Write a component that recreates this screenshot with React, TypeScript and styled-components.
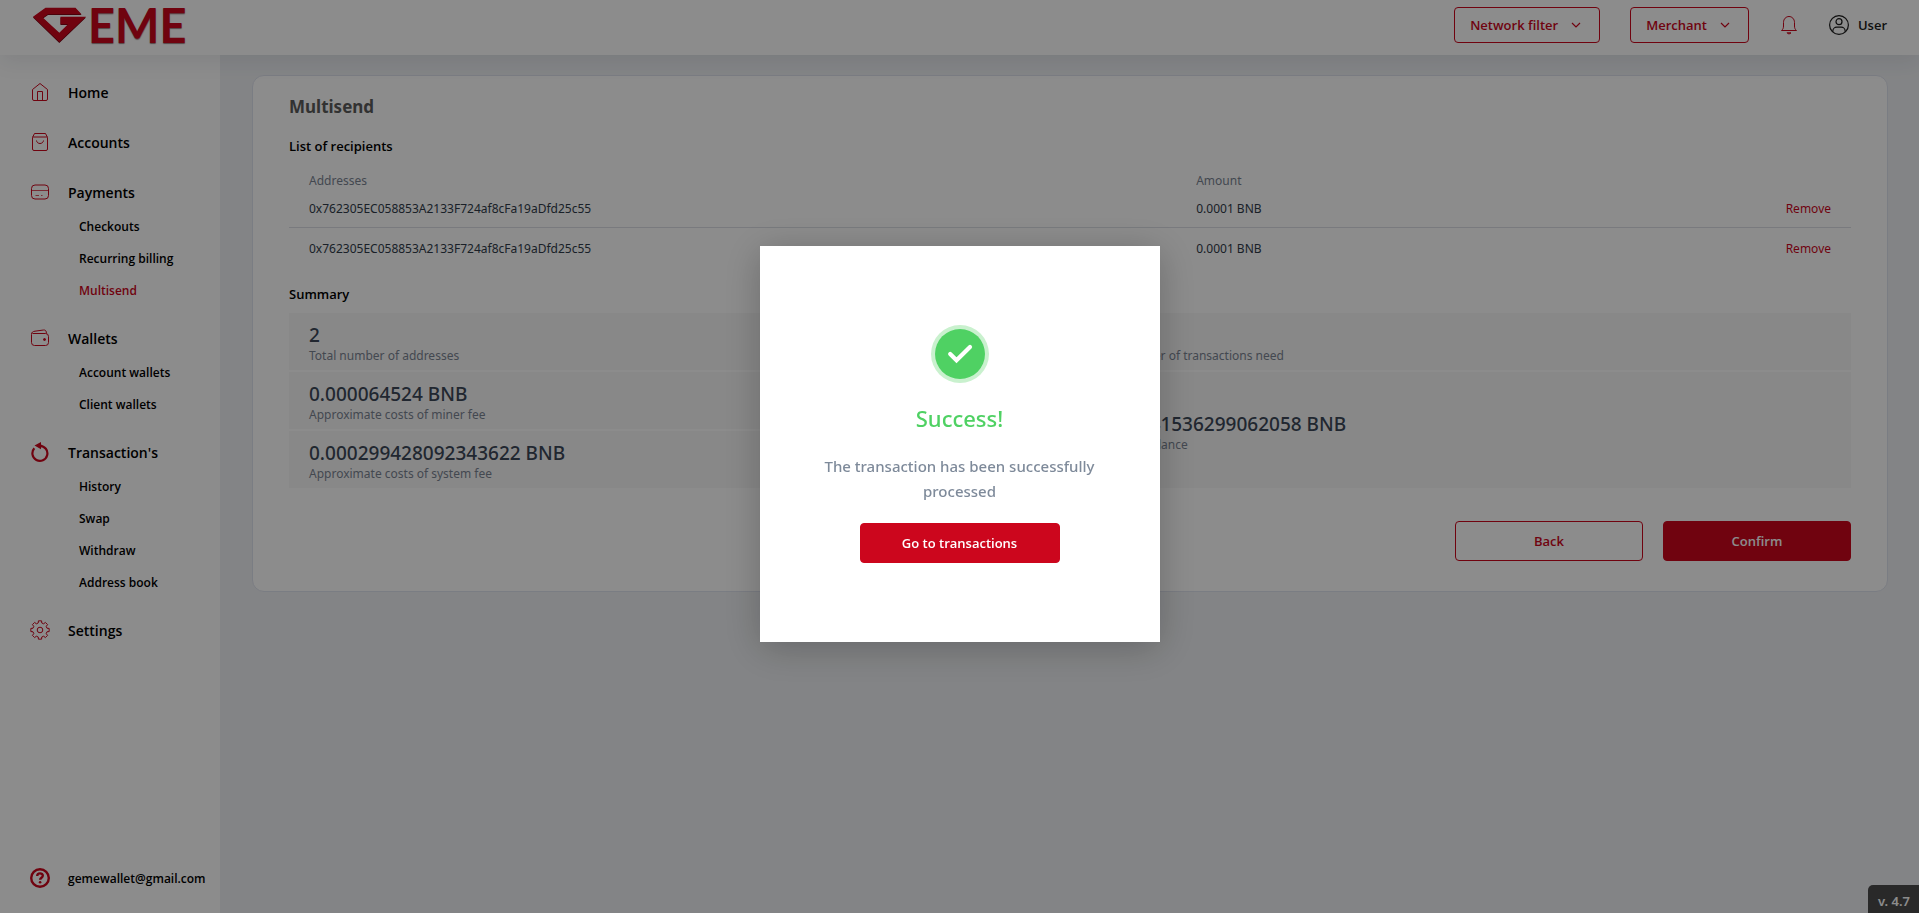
import React from 'react';
import styled, { createGlobalStyle } from 'styled-components';

const RED = '#cc061d';
const GREEN = '#4fd163';
const BODY_FONT = '"Noto Sans", "Open Sans", sans-serif';
const UI_FONT = '"Open Sans", "Noto Sans", sans-serif';

const GlobalStyle = createGlobalStyle`
  *, *::before, *::after { box-sizing: border-box; }
  body { margin: 0; background: #eff1f4; font-family: ${BODY_FONT}; color: #000; }
  button { font-family: inherit; cursor: pointer; }
  h1, h2, p, ul { margin: 0; padding: 0; }
  ul { list-style: none; }
`;

const Page = styled.div`
  display: flex;
  flex-direction: column;
  min-height: 100vh;
`;

/* Header */

const Header = styled.header`
  position: relative;
  z-index: 1;
  display: flex;
  align-items: center;
  justify-content: space-between;
  height: 55px;
  padding: 0 32px 5px;
  background: #fff;
  box-shadow: 0 8px 20px rgba(30, 40, 60, 0.08);
`;

const Logo = styled.a`
  display: flex;
  align-items: center;
  color: ${RED};
  text-decoration: none;
  text-shadow: 0 1px 1px rgba(60, 0, 8, 0.5);
`;

const LogoText = styled.span`
  font-family: Lato, sans-serif;
  font-size: 47px;
  line-height: 50px;
  font-weight: 700;
`;

const HeaderTools = styled.div`
  display: flex;
  align-items: center;
`;

const FilterButton = styled.button`
  display: flex;
  align-items: center;
  gap: 10px;
  height: 36px;
  margin-right: 30px;
  padding: 0 15px;
  border: 1px solid ${RED};
  border-radius: 4px;
  background: transparent;
  color: ${RED};
  font-family: ${UI_FONT};
  font-size: 13px;
  font-weight: 600;
`;

const IconButton = styled.button`
  display: flex;
  padding: 0;
  margin-right: 30px;
  border: 0;
  background: none;
`;

const UserButton = styled.button`
  display: flex;
  align-items: center;
  gap: 9px;
  padding: 0;
  border: 0;
  background: none;
  color: #1c1c1c;
  font-family: ${UI_FONT};
  font-size: 13px;
  font-weight: 600;
`;

/* Sidebar */

const Body = styled.div`
  display: flex;
  flex: 1;
`;

const Sidebar = styled.nav`
  display: flex;
  flex-direction: column;
  justify-content: space-between;
  flex: 0 0 220px;
  padding: 19px 0 17px;
  background: #fff;
  font-family: ${UI_FONT};
  font-weight: 600;
`;

const NavGroups = styled.ul`
  display: flex;
  flex-direction: column;
  gap: 14px;
`;

const NavLink = styled.a<{ $small?: boolean }>`
  display: flex;
  align-items: center;
  gap: 18px;
  height: 36px;
  padding-left: 30px;
  color: #000;
  font-size: ${(p) => (p.$small ? 12 : 14)}px;
  text-decoration: none;
`;

const SubLink = styled.a<{ $active?: boolean }>`
  display: flex;
  align-items: center;
  height: 32px;
  padding-left: 79px;
  color: ${(p) => (p.$active ? RED : '#000')};
  font-size: 12px;
  text-decoration: none;
`;

/* Content */

const Main = styled.main`
  flex: 1;
  min-width: 0;
  padding: 20px 31px 20px 32px;
`;

const Card = styled.section`
  padding: 19px 36px 30px;
  border: 1px solid #dfe3ee;
  border-radius: 12px;
  background: #fff;
`;

const Title = styled.h1`
  margin-bottom: 17px;
  color: #5c5c5c;
  font-size: 17px;
  line-height: 24px;
  font-weight: 700;
`;

const Subtitle = styled.h2`
  font-family: ${UI_FONT};
  font-size: 13px;
  line-height: 20px;
  font-weight: 600;
`;

const Recipients = styled.table`
  width: 100%;
  margin: 18px 0 16px;
  border-collapse: separate;
  border-spacing: 0;
  table-layout: fixed;
  font-size: 12px;
  text-align: left;

  th, td { padding: 0 20px; }
  th { height: 14px; line-height: 14px; font-weight: 400; color: #7b8493; }
  td { height: 40px; padding-top: 2px; line-height: 16px; color: #303b4a; }
  tbody tr:not(:last-child) td { border-bottom: 1px solid #dcdfe6; }
`;

const AddressCol = styled.col`width: 56.8%;`;
const ActionCol = styled.col`width: 15%;`;

const ActionCell = styled.td`
  text-align: right;
`;

const RemoveButton = styled.button`
  padding: 0;
  border: 0;
  background: none;
  color: ${RED};
  font-size: 12px;
  line-height: 16px;
`;

const SummaryGrid = styled.div`
  display: grid;
  grid-template-columns: 1fr 1fr;
  gap: 2px 0;
  margin: 9px 0 33px;
`;

const Stat = styled.div<{ $tall?: boolean }>`
  display: flex;
  flex-direction: column;
  justify-content: center;
  grid-row: ${(p) => (p.$tall ? 'span 2' : 'auto')};
  padding: 10px 20px 5px;
  background: #f8f8f8;
`;

const StatValue = styled.p`
  color: #3c4858;
  font-size: 19px;
  line-height: 24px;
  font-weight: 500;
`;

const StatLabel = styled.p`
  color: #7b8493;
  font-size: 12px;
  line-height: 18px;
`;

const Actions = styled.div`
  display: flex;
  justify-content: flex-end;
  gap: 20px;
`;

const Button = styled.button<{ $outline?: boolean; $width: number }>`
  width: ${(p) => p.$width}px;
  height: 40px;
  border: 1px solid ${RED};
  border-radius: 4px;
  background: ${(p) => (p.$outline ? 'transparent' : RED)};
  color: ${(p) => (p.$outline ? RED : '#fff')};
  font-family: ${UI_FONT};
  font-size: 13px;
  font-weight: 600;
`;

const Version = styled.div`
  position: fixed;
  right: 0;
  bottom: 0;
  padding: 6px 9px 2px 10px;
  border-radius: 5px 0 0;
  background: #4b4b4b;
  color: #fff;
  font-size: 13px;
  line-height: 20px;
  font-weight: 600;
`;

/* Dialog */

const Overlay = styled.div`
  position: fixed;
  inset: 0;
  z-index: 10;
  display: flex;
  align-items: center;
  justify-content: center;
  padding-bottom: 25px;
  background: rgba(0, 0, 0, 0.45);
`;

const Dialog = styled.div`
  display: flex;
  flex-direction: column;
  align-items: center;
  width: 400px;
  padding: 79px 60px;
  background: #fff;
  text-align: center;
  box-shadow: 0 6px 36px rgba(0, 0, 0, 0.24);
`;

const DialogTitle = styled.h2`
  margin: 19px 0 20px;
  color: ${GREEN};
  font-size: 22px;
  line-height: 32px;
  font-weight: 500;
`;

const DialogText = styled.p`
  margin-bottom: 19px;
  color: #7e8a9a;
  font-size: 15px;
  line-height: 25px;
  font-weight: 500;
`;

/* Icons */

type IconName = 'home' | 'bag' | 'card' | 'wallet' | 'refresh' | 'gear' | 'help';

const gearPath = (() => {
  const points: string[] = [];
  for (let i = 0; i < 8; i++) {
    const base = (i * Math.PI) / 4 - Math.PI / 2;
    [[-0.25, 7.2], [-0.17, 9.3], [0.17, 9.3], [0.25, 7.2]].forEach(([a, r]) => {
      points.push(`${(10 + r * Math.cos(base + a)).toFixed(2)} ${(10 + r * Math.sin(base + a)).toFixed(2)}`);
    });
  }
  return `M${points.join('L')}Z`;
})();

const icons: Record<IconName, React.ReactNode> = {
  home: (
    <>
      <path d="M2.500 7.500 10 1.500l7.500 6V17a1.500 1.500 0 0 1-1.500 1.500H4A1.500 1.500 0 0 1 2.500 17Z" />
      <path d="M7.500 18.500V9.500h5v9" />
    </>
  ),
  bag: (
    <>
      <path d="M2.500 5.500 4.500 1.500h11l2 4V17a1.500 1.500 0 0 1-1.500 1.500H4A1.500 1.500 0 0 1 2.500 17Z" />
      <path d="M2.500 5h15M6.500 8.500c.4 4 6.600 4 7 0" />
    </>
  ),
  card: (
    <>
      <rect x="1.500" y="3" width="17" height="14" rx="3.500" />
      <path d="M1.500 8.500h17" strokeOpacity="0.7" />
      <path d="M5.500 13.500H9M11 13.500h1.500" strokeOpacity="0.7" />
    </>
  ),
  wallet: (
    <>
      <path d="M1.500 6.500v8a3 3 0 0 0 3 3h11a3 3 0 0 0 3-3v-6a3 3 0 0 0-3-3h-13" />
      <path d="M1.500 6.500C1.500 4 3 3.500 5 3.200l8.500-1.200c1.500-.2 2.500.5 2.800 2V5.500" />
      <circle cx="14.500" cy="11.500" r="1" fill="currentColor" />
    </>
  ),
  refresh: (
    <>
      <path strokeWidth="2.200" d="M4.300 6.300A7.500 7.500 0 1 0 10 3.800" />
      <path fill="currentColor" stroke="none" d="M4.500 3.600 11 0v2.400l1.500 1-1.500 1.200v2.600Z" />
    </>
  ),
  gear: (
    <>
      <path d={gearPath} strokeLinejoin="round" />
      <circle cx="10" cy="10" r="2.800" />
    </>
  ),
  help: (
    <>
      <circle cx="10" cy="10" r="8.800" strokeWidth="2.400" />
      <path strokeWidth="2.400" d="M7.200 8c0-3.600 5.800-3.400 5.600-.2-.1 1.900-2.700 1.900-2.700 4" />
      <circle cx="10.100" cy="14.300" r="1.300" fill="currentColor" stroke="none" />
    </>
  ),
};

const IconSvg = styled.svg`
  flex: none;
  width: 20px;
  height: 20px;
  color: ${RED};
  fill: none;
  stroke: currentColor;
`;

const Icon = ({ name }: { name: IconName }) => (
  <IconSvg viewBox="0 0 20 20" aria-hidden="true">{icons[name]}</IconSvg>
);

const Chevron = () => (
  <svg width="16" height="16" viewBox="0 0 16 16" fill="none" stroke={RED} strokeWidth="1.200" aria-hidden="true">
    <path d="m4 6 4 4 4-4" />
  </svg>
);

const Gem = () => (
  <svg width="56" height="50" viewBox="0 0 56 50" fill={RED} aria-hidden="true">
    <path
      fill="#6e0311"
      d="M1 17.500 13.500 8.500H43.500L49.500 15H16L11 18.500 27.300 33.500 36 25H28.500V17.500H54L27.300 43Z"
    />
    <path d="M1 16.700 13.500 7.700H43.500L49.500 14.200H16L11 17.700 27.300 32.700 36 24.200H28.500V16.700H54L27.300 42Z" />
  </svg>
);

/* Data */

type Group = { icon: IconName; label: string; children?: string[] };

const navigation: Group[] = [
  { icon: 'home', label: 'Home' },
  { icon: 'bag', label: 'Accounts' },
  { icon: 'card', label: 'Payments', children: ['Checkouts', 'Recurring billing', 'Multisend'] },
  { icon: 'wallet', label: 'Wallets', children: ['Account wallets', 'Client wallets'] },
  { icon: 'refresh', label: "Transaction's", children: ['History', 'Swap', 'Withdraw', 'Address book'] },
  { icon: 'gear', label: 'Settings' },
];

const recipients = [
  { id: 1, address: '0x762305EC058853A2133F724af8cFa19aDfd25c55', amount: '0.0001 BNB' },
  { id: 2, address: '0x762305EC058853A2133F724af8cFa19aDfd25c55', amount: '0.0001 BNB' },
];

const summary = [
  { value: '2', label: 'Total number of addresses' },
  { value: '1', label: 'Total number of transactions need' },
  { value: '0.000064524 BNB', label: 'Approximate costs of miner fee' },
  { value: '0.056341536299062058 BNB', label: 'Available balance', tall: true },
  { value: '0.000299428092343622 BNB', label: 'Approximate costs of system fee' },
];

export default function App() {
  return (
    <Page>
      <GlobalStyle />
      <Header>
        <Logo href="#" aria-label="GEME">
          <Gem />
          <LogoText>EME</LogoText>
        </Logo>
        <HeaderTools>
          <FilterButton type="button">Network filter<Chevron /></FilterButton>
          <FilterButton type="button">Merchant<Chevron /></FilterButton>
          <IconButton type="button" aria-label="Notifications">
            <svg width="20" height="20" viewBox="0 0 20 20" fill="none" stroke={RED} aria-hidden="true">
              <path d="M2.500 15.500c1.500-1.300 2-2.500 2-4.500V7.500C4.500 4 7 1.500 10 1.500s5.500 2.500 5.500 6V11c0 2 .5 3.200 2 4.500Z" />
              <path d="M8 17.800c.6 1.400 3.400 1.400 4 0Z" />
            </svg>
          </IconButton>
          <UserButton type="button">
            <svg width="20" height="20" viewBox="0 0 20 20" fill="none" stroke="#1c1c1c" strokeWidth="1.200" aria-hidden="true">
              <circle cx="10" cy="10" r="9.400" />
              <circle cx="10" cy="6.700" r="3" />
              <path d="M3.800 17v-.800a4 4 0 0 1 4-4h4.400a4 4 0 0 1 4 4v.8" />
            </svg>
            User
          </UserButton>
        </HeaderTools>
      </Header>

      <Body>
        <Sidebar aria-label="Main">
          <NavGroups>
            {navigation.map((group) => (
              <li key={group.label}>
                <NavLink href="#"><Icon name={group.icon} />{group.label}</NavLink>
                {group.children && (
                  <ul>
                    {group.children.map((child) => (
                      <li key={child}>
                        <SubLink href="#" $active={child === 'Multisend'}>{child}</SubLink>
                      </li>
                    ))}
                  </ul>
                )}
              </li>
            ))}
          </NavGroups>
          <NavLink href="mailto:gemewallet@gmail.com" $small><Icon name="help" />gemewallet@gmail.com</NavLink>
        </Sidebar>

        <Main>
          <Card>
            <Title>Multisend</Title>
            <Subtitle>List of recipients</Subtitle>
            <Recipients>
              <colgroup><AddressCol /><col /><ActionCol /></colgroup>
              <thead>
                <tr><th scope="col">Addresses</th><th scope="col">Amount</th><th aria-label="Actions" /></tr>
              </thead>
              <tbody>
                {recipients.map((r) => (
                  <tr key={r.id}>
                    <td>{r.address}</td>
                    <td>{r.amount}</td>
                    <ActionCell><RemoveButton type="button">Remove</RemoveButton></ActionCell>
                  </tr>
                ))}
              </tbody>
            </Recipients>
            <Subtitle>Summary</Subtitle>
            <SummaryGrid>
              {summary.map((s) => (
                <Stat key={s.label} $tall={s.tall}>
                  <StatValue>{s.value}</StatValue>
                  <StatLabel>{s.label}</StatLabel>
                </Stat>
              ))}
            </SummaryGrid>
            <Actions>
              <Button type="button" $outline $width={188}>Back</Button>
              <Button type="button" $width={188}>Confirm</Button>
            </Actions>
          </Card>
        </Main>
      </Body>

      <Version>v. 4.7</Version>

      <Overlay>
        <Dialog role="dialog" aria-modal="true" aria-labelledby="dialog-title">
          <svg width="58" height="58" viewBox="0 0 58 58" aria-hidden="true">
            <circle cx="29" cy="29" r="29" fill="#c9f1ce" />
            <circle cx="29" cy="29" r="25" fill={GREEN} />
            <path d="m19.200 29 6.300 6.300L39 22" fill="none" stroke="#fff" strokeWidth="4.200" strokeLinecap="round" />
          </svg>
          <DialogTitle id="dialog-title">Success!</DialogTitle>
          <DialogText>The transaction has been successfully processed</DialogText>
          <Button type="button" $width={200}>Go to transactions</Button>
        </Dialog>
      </Overlay>
    </Page>
  );
}
